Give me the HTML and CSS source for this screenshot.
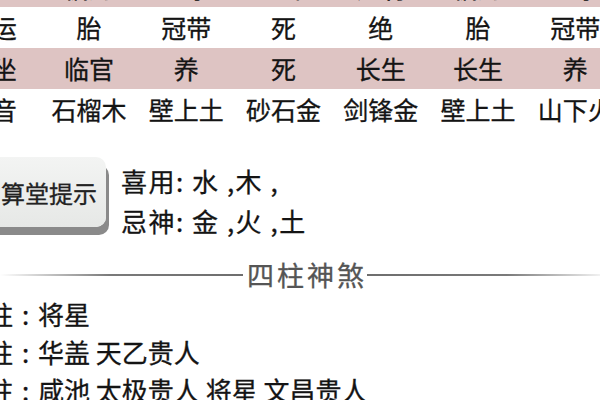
FILE: index.html
```html
<!DOCTYPE html>
<html lang="zh-CN">
<head>
<meta charset="utf-8">
<title>四柱</title>
<link rel="stylesheet" href="styles.css">
</head>
<body>
<div class="table">
  <div class="row pink row-first">
    <span>副星</span><span>偏财</span><span>七杀</span><span>正印</span><span>比肩</span><span>偏财</span><span>七杀</span>
  </div>
  <div class="row">
    <span>星运</span><span>胎</span><span>冠带</span><span>死</span><span>绝</span><span>胎</span><span>冠带</span>
  </div>
  <div class="row pink">
    <span>自坐</span><span>临官</span><span>养</span><span>死</span><span>长生</span><span>长生</span><span>养</span>
  </div>
  <div class="row">
    <span>纳音</span><span>石榴木</span><span>壁上土</span><span>砂石金</span><span>剑锋金</span><span>壁上土</span><span>山下火</span>
  </div>
</div>

<div class="tip">
  <div class="tip-btn">算堂提示</div>
  <div class="tip-text">
    <div>喜用: 水 ,木 ,</div>
    <div>忌神: 金 ,火 ,土</div>
  </div>
</div>

<div class="divider">
  <span class="rule rule-left"></span>
  <span class="divider-title">四柱神煞</span>
  <span class="rule rule-right"></span>
</div>

<div class="shensha">
  <div>年柱<span class="colon">:</span>将星</div>
  <div>月柱<span class="colon">:</span>华盖 天乙贵人</div>
  <div>日柱<span class="colon">:</span>咸池 太极贵人 将星 文昌贵人</div>
  <div>时柱<span class="colon">:</span>天乙贵人</div>
</div>
</body>
</html>
```

FILE: styles.css
```css
html, body {
  margin: 0;
  padding: 0;
  background: #ffffff;
  overflow: hidden;
}

body {
  width: 600px;
  height: 400px;
  font-family: "Noto Sans CJK SC", "Noto Sans", sans-serif;
  color: #141414;
  -webkit-text-stroke: 0.3px currentColor;
}

.table {
  margin-top: -32px;
  margin-left: -57px;
  width: 681px;
}

.row {
  display: grid;
  grid-template-columns: repeat(7, 1fr);
  height: 41px;
  align-items: center;
  font-size: 25px;
  line-height: 41px;
}

.row-first {
  height: 39px;
  line-height: 39px;
}

.row span {
  text-align: center;
  white-space: nowrap;
}

.pink {
  background: #dec4c3;
}

.tip {
  display: flex;
  align-items: flex-start;
  margin-top: 27px;
}

.tip-btn {
  margin-left: -30px;
  width: 136px;
  height: 70px;
  box-sizing: border-box;
  padding-right: 9px;
  display: flex;
  align-items: center;
  justify-content: flex-end;
  font-size: 24px;
  color: #222;
  background: linear-gradient(#f3f4f3, #e6e8e6);
  border-radius: 10px;
  box-shadow: 3px 8px 0 #8a8a8a;
}

.tip-text {
  margin-left: 15px;
  margin-top: 4px;
  font-size: 26px;
  line-height: 40px;
  letter-spacing: 1.5px;
}

.divider {
  display: flex;
  align-items: center;
  margin-top: 19px;
  height: 30px;
}

.rule {
  height: 2px;
}

.rule-left {
  flex: none;
  width: 243px;
  background: linear-gradient(to right, rgba(120,120,120,0), #7a7a7a 45%, #6e6e6e);
}

.rule-right {
  flex: 1;
  background: linear-gradient(to right, #6e6e6e, #7a7a7a 60%, rgba(120,120,120,0.1));
}

.divider-title {
  padding: 0 0 0 4px;
  font-size: 27px;
  letter-spacing: 3px;
  line-height: 30px;
  color: #555;
}

.shensha {
  margin-top: 5px;
  margin-left: -39px;
  font-size: 26px;
  line-height: 38px;
}

.colon {
  display: inline-block;
  width: 25px;
  text-align: center;
}
```
